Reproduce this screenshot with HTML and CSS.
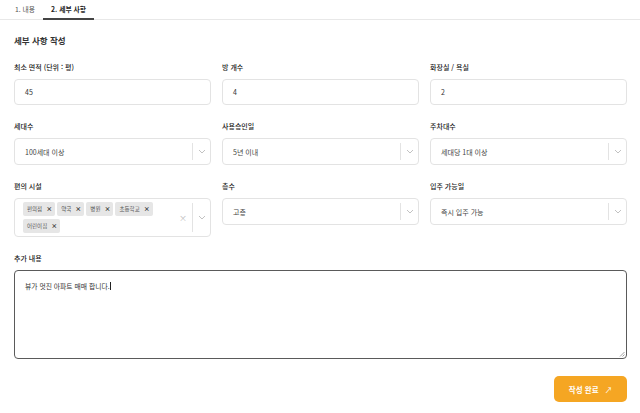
FILE: index.html
```html
<!DOCTYPE html>
<html lang="ko">
<head>
<meta charset="utf-8">
<link rel="stylesheet" href="styles.css">
</head>
<body>
<nav class="tabs">
  <div class="tab">1. 내용</div>
  <div class="tab active">2. 세부 사항</div>
</nav>
<main class="content">
  <h2 class="title">세부 사항 작성</h2>
  <div class="grid">
    <div class="field">
      <label class="label">최소 면적 (단위 : 평)</label>
      <div class="input">45</div>
    </div>
    <div class="field">
      <label class="label">방 개수</label>
      <div class="input">4</div>
    </div>
    <div class="field">
      <label class="label">화장실 / 욕실</label>
      <div class="input">2</div>
    </div>

    <div class="field">
      <label class="label">세대수</label>
      <div class="select"><span class="value">100세대 이상</span><span class="sep"></span><span class="chev"><svg width="8" height="5" viewBox="0 0 8 5"><path d="M1 1l3 3 3-3" fill="none" stroke="#bbb" stroke-width="0.9"/></svg></span></div>
    </div>
    <div class="field">
      <label class="label">사용승인일</label>
      <div class="select"><span class="value">5년 이내</span><span class="sep"></span><span class="chev"><svg width="8" height="5" viewBox="0 0 8 5"><path d="M1 1l3 3 3-3" fill="none" stroke="#bbb" stroke-width="0.9"/></svg></span></div>
    </div>
    <div class="field">
      <label class="label">주차대수</label>
      <div class="select"><span class="value">세대당 1대 이상</span><span class="sep"></span><span class="chev"><svg width="8" height="5" viewBox="0 0 8 5"><path d="M1 1l3 3 3-3" fill="none" stroke="#bbb" stroke-width="0.9"/></svg></span></div>
    </div>

    <div class="field">
      <label class="label">편의 시설</label>
      <div class="select multi">
        <div class="tags">
          <span class="tag">편의점<b>×</b></span>
          <span class="tag">약국<b>×</b></span>
          <span class="tag">병원<b>×</b></span>
          <span class="tag">초등학교<b>×</b></span>
          <span class="tag">어린이집<b>×</b></span>
        </div>
        <span class="clear">×</span>
        <span class="sep"></span>
        <span class="chev"><svg width="8" height="5" viewBox="0 0 8 5"><path d="M1 1l3 3 3-3" fill="none" stroke="#bbb" stroke-width="0.9"/></svg></span>
      </div>
    </div>
    <div class="field">
      <label class="label">층수</label>
      <div class="select"><span class="value">고층</span><span class="sep"></span><span class="chev"><svg width="8" height="5" viewBox="0 0 8 5"><path d="M1 1l3 3 3-3" fill="none" stroke="#bbb" stroke-width="0.9"/></svg></span></div>
    </div>
    <div class="field">
      <label class="label">입주 가능일</label>
      <div class="select"><span class="value">즉시 입주 가능</span><span class="sep"></span><span class="chev"><svg width="8" height="5" viewBox="0 0 8 5"><path d="M1 1l3 3 3-3" fill="none" stroke="#bbb" stroke-width="0.9"/></svg></span></div>
    </div>

    <div class="field wide">
      <label class="label">추가 내용</label>
      <div class="textarea">뷰가 멋진 아파트 매매 합니다.<span class="caret"></span>
        <svg class="grip" width="6" height="6" viewBox="0 0 6 6"><path d="M5.5 1L1 5.5M5.5 3.5L3.5 5.5" stroke="#888" stroke-width="0.8"/></svg>
      </div>
    </div>
  </div>
  <div class="actions">
    <button class="submit">작성 완료 <span class="arrow">↗</span></button>
  </div>
</main>
</body>
</html>
```

FILE: styles.css
```css
* { box-sizing: border-box; }
html, body { margin: 0; padding: 0; background: #fff; }
body {
  font-family: "Noto Sans CJK KR", "Noto Sans", sans-serif;
  color: #333;
  width: 640px;
  height: 413px;
  overflow: hidden;
}
.tabs {
  display: flex;
  height: 20px;
  border-bottom: 1px solid #e8e8e8;
  padding-left: 7px;
}
.tab {
  font-size: 6.8px;
  line-height: 18px;
  padding: 0 8px;
  color: #555;
}
.tab.active {
  color: #222;
  font-weight: 600;
  border-bottom: 2px solid #444;
  height: 20px;
}
.content { padding: 0 13px 0 14px; }
.title {
  margin: 0;
  padding-top: 14px;
  font-size: 8.5px;
  line-height: 12px;
  font-weight: 700;
  color: #333;
}
.grid {
  margin-top: 15px;
  display: grid;
  grid-template-columns: 197px 197px 197px;
  column-gap: 11px;
  row-gap: 15px;
  align-items: start;
}
.field { display: flex; flex-direction: column; }
.field.wide { grid-column: 1 / 4; }
.label {
  font-size: 7px;
  line-height: 12px;
  font-weight: 500;
  color: #222;
  margin-bottom: 6px;
}
.input {
  height: 26px;
  border: 1px solid #e3e3e3;
  border-radius: 4px;
  font-size: 7px;
  line-height: 24px;
  padding: 0 10px;
  color: #333;
}
.select {
  height: 27px;
  border: 1px solid #e3e3e3;
  border-radius: 4px;
  display: flex;
  align-items: center;
  padding-left: 10px;
  font-size: 7px;
  color: #444;
}
.select .value { flex: 1; }
.sep {
  width: 1px;
  align-self: stretch;
  margin: 4px 0;
  background: #e3e3e3;
}
.chev {
  width: 17px;
  display: flex;
  justify-content: center;
  align-items: center;
}
.select.multi {
  height: 39px;
  padding-left: 8px;
}
.tags {
  flex: 1;
  display: flex;
  flex-wrap: wrap;
  gap: 3px 2px;
  padding: 0;
}
.tag {
  background: #e6e6e6;
  border-radius: 2px;
  font-size: 5.5px;
  line-height: 14px;
  height: 14px;
  padding: 0 3px 0 4px;
  color: #555;
}
.tag b {
  font-weight: 700;
  color: #333;
  margin-left: 4px;
  font-size: 6px;
}
.clear {
  color: #bbb;
  font-size: 8px;
  width: 18px;
  text-align: center;
  margin-right: 0;
}
.textarea {
  position: relative;
  height: 89px;
  border: 1px solid #5a5a5a;
  border-radius: 4px;
  padding: 9px 10px;
  font-size: 6.8px;
  line-height: 12px;
  color: #333;
}
.caret {
  display: inline-block;
  width: 1px;
  height: 8px;
  background: #222;
  vertical-align: -1px;
}
.grip { position: absolute; right: 1px; bottom: 1px; }
.actions {
  display: flex;
  justify-content: flex-end;
  margin-top: 17px;
}
.submit {
  width: 73px;
  height: 26px;
  border: 0;
  border-radius: 5px;
  background: #f5a623;
  color: #fff;
  font-family: inherit;
  font-size: 7.5px;
  font-weight: 700;
  padding: 0;
}
.arrow { margin-left: 4px; font-weight: 400; }
```
